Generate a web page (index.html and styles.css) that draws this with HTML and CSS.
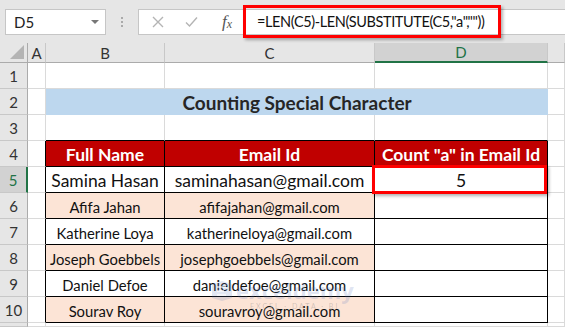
FILE: index.html
```html
<!DOCTYPE html>
<html lang="en">
<head>
    <meta charset="UTF-8">
    <meta name="viewport" content="width=device-width, initial-scale=1.0">
    <title>Counting Special Character</title>
    <link rel="stylesheet" href="styles.css">
</head>
<body>
    <div class="formula-row">
        <div class="name-box">
            <span>D5</span>
            <span class="caret"></span>
        </div>
        <div class="grip"><i></i><i></i><i></i></div>
        <div class="formula-bar">
            <svg class="fb-icon cancel" width="12" height="12" viewBox="0 0 12 12"><path d="M1 1L11 11M11 1L1 11" stroke="#b4b4b4" stroke-width="1.4" fill="none"/></svg>
            <svg class="fb-icon enter" width="13" height="12" viewBox="0 0 13 12"><path d="M1 6.5L4.5 10L12 1.5" stroke="#b4b4b4" stroke-width="1.4" fill="none"/></svg>
            <span class="fx"><i>f</i><sub>x</sub></span>
            <div class="formula-input">=LEN(C5)-LEN(SUBSTITUTE(C5,"a",""))</div>
        </div>
    </div>

    <div class="sheet">
        <!-- column headers -->
        <div class="hd corner"><span class="tri"></span></div>
        <div class="hd col">A</div>
        <div class="hd col">B</div>
        <div class="hd col">C</div>
        <div class="hd col sel">D</div>
        <div class="hd col"></div>

        <!-- 1 -->
        <div class="hd row">1</div>
        <div class="c"></div><div class="c"></div><div class="c"></div><div class="c"></div><div class="c"></div>

        <!-- 2 -->
        <div class="hd row">2</div>
        <div class="c"></div>
        <div class="c title">Counting Special Character</div>
        <div class="c"></div>

        <!-- 3 -->
        <div class="hd row">3</div>
        <div class="c"></div>
        <div class="c above"></div><div class="c above"></div><div class="c above"></div>
        <div class="c"></div>

        <!-- 4 -->
        <div class="hd row">4</div>
        <div class="c edge"></div>
        <div class="c t th">Full Name</div>
        <div class="c t th">Email Id</div>
        <div class="c t th">Count "a" in Email Id</div>
        <div class="c"></div>

        <!-- 5 -->
        <div class="hd row sel">5</div>
        <div class="c edge"></div>
        <div class="c t big">Samina Hasan</div>
        <div class="c t big">saminahasan@gmail.com</div>
        <div class="c t big active">5</div>
        <div class="c"></div>

        <!-- 6 -->
        <div class="hd row">6</div>
        <div class="c edge"></div>
        <div class="c t band">Afifa Jahan</div>
        <div class="c t band">afifajahan@gmail.com</div>
        <div class="c t"></div>
        <div class="c"></div>

        <!-- 7 -->
        <div class="hd row">7</div>
        <div class="c edge"></div>
        <div class="c t">Katherine Loya</div>
        <div class="c t">katherineloya@gmail.com</div>
        <div class="c t"></div>
        <div class="c"></div>

        <!-- 8 -->
        <div class="hd row">8</div>
        <div class="c edge"></div>
        <div class="c t band">Joseph Goebbels</div>
        <div class="c t band">josephgoebbels@gmail.com</div>
        <div class="c t"></div>
        <div class="c"></div>

        <!-- 9 -->
        <div class="hd row">9</div>
        <div class="c edge"></div>
        <div class="c t">Daniel Defoe</div>
        <div class="c t">danieldefoe@gmail.com</div>
        <div class="c t"></div>
        <div class="c"></div>

        <!-- 10 -->
        <div class="hd row">10</div>
        <div class="c edge"></div>
        <div class="c t band">Sourav Roy</div>
        <div class="c t band">souravroy@gmail.com</div>
        <div class="c t"></div>
        <div class="c"></div>

        <!-- 11, only its top edge shows -->
        <div class="hd row"></div>
        <div class="c"></div><div class="c"></div><div class="c"></div><div class="c"></div><div class="c"></div>

        <div class="mark">
            <svg class="mark-icon" width="24" height="22" viewBox="0 0 24 22">
                <path d="M2 4L12 1L22 4V18L12 21L2 18Z" fill="rgba(90,120,190,0.18)"/>
                <path d="M7 7H16M7 11H14M7 15H16" stroke="rgba(255,255,255,0.6)" stroke-width="2"/>
            </svg>
            <div>
                <div class="mark-name">exceldemy</div>
                <div class="mark-sub">EXCEL · DATA · BI</div>
            </div>
        </div>
    </div>
</body>
</html>
```

FILE: styles.css
```css
* {
    box-sizing: border-box;
}
body {
    margin: 0;
    width: 565px;
    height: 327px;
    overflow: hidden;
    background: #fff;
    font-family: Lato, "Open Sans", sans-serif;
}

/* name box + formula bar */
.formula-row {
    height: 43px;
    background: #e6e6e6;
    display: flex;
    align-items: center;
    padding-left: 5px;
}
.name-box {
    width: 101px;
    height: 26px;
    background: #fff;
    border: 1px solid #c6c6c6;
    display: flex;
    align-items: center;
    justify-content: space-between;
    padding: 0 6px 0 8px;
    font-size: 15px;
    color: #222;
}
.caret {
    width: 0;
    height: 0;
    border-left: 4px solid transparent;
    border-right: 4px solid transparent;
    border-top: 4px solid #777;
}
.grip {
    width: 32px;
    display: flex;
    flex-direction: column;
    align-items: center;
    gap: 2px;
}
.grip i {
    width: 2px;
    height: 2px;
    background: #aaa;
}
.formula-bar {
    flex: 1;
    height: 26px;
    background: #fff;
    border: 1px solid #c6c6c6;
    border-right: none;
    display: flex;
    align-items: center;
    padding-left: 13px;
}
.fb-icon.cancel {
    margin-right: 21px;
}
.fb-icon.enter {
    margin-right: 24px;
}
.fx {
    font-family: "Liberation Serif", serif;
    font-size: 17px;
    color: #555;
    margin-right: 11px;
}
.fx i {
    font-style: italic;
}
.fx sub {
    font-style: italic;
    font-size: 12px;
    vertical-align: -1px;
}
.formula-input {
    width: 258px;
    height: 33px;
    flex-shrink: 0;
    border: 3px solid #ff0000;
    box-shadow: 2px 2px 3px rgba(0, 0, 0, 0.3);
    display: flex;
    align-items: center;
    padding-left: 11px;
    font-size: 14.5px;
    letter-spacing: -0.4px;
    color: #111;
    white-space: nowrap;
}

/* worksheet */
.sheet {
    position: relative;
    display: grid;
    grid-template-columns: 28px 18px 119px 210px 173px 1fr;
    grid-template-rows: 20px repeat(10, 26px) 4px;
}
.hd {
    background: #e6e6e6;
    color: #333;
    font-size: 15px;
    display: flex;
    align-items: center;
    justify-content: center;
}
.hd.col {
    border-right: 1px solid #c8c8c8;
    border-bottom: 1px solid #ababab;
}
.hd.row {
    border-right: 1px solid #ababab;
    border-bottom: 1px solid #c8c8c8;
}
.corner {
    position: relative;
    border-right: 1px solid #ababab;
    border-bottom: 1px solid #ababab;
}
.tri {
    position: absolute;
    right: 3px;
    bottom: 3px;
    width: 0;
    height: 0;
    border-left: 14px solid transparent;
    border-bottom: 14px solid #b4b4b4;
}
.hd.col.sel {
    background: #d2d2d2;
    color: #217346;
    border-bottom: 2px solid #217346;
}
.hd.row.sel {
    background: #d2d2d2;
    color: #217346;
    border-right: 2px solid #217346;
}

.c {
    border-right: 1px solid #dadada;
    border-bottom: 1px solid #dadada;
    display: flex;
    align-items: center;
    justify-content: center;
    font-size: 14.8px;
    color: #111;
    white-space: nowrap;
}
.c.title {
    grid-column: span 3;
    background: #bdd7ee;
    border: none;
    font-weight: bold;
    font-size: 19px;
    color: #262626;
}
.c.above {
    border-bottom-color: #000;
}
.c.edge {
    border-right-color: #000;
}
.c.t {
    border-right-color: #000;
    border-bottom-color: #000;
    padding-top: 2px;
}
.c.th {
    background: #c00000;
    color: #fff;
    font-weight: bold;
    font-size: 17.5px;
}
.c.big {
    font-size: 17.5px;
}
.c.band {
    background: #fce4d6;
}
.c.active {
    position: relative;
}
.c.active::after {
    content: "";
    position: absolute;
    top: -2px;
    bottom: -2px;
    left: -3px;
    right: 0;
    border: 3px solid #ff0000;
    box-shadow: 2px 2px 3px rgba(0, 0, 0, 0.3);
    z-index: 1;
}

/* faint logo over the data */
.mark {
    position: absolute;
    left: 210px;
    top: 235px;
    display: flex;
    align-items: flex-start;
    gap: 2px;
    color: rgba(90, 120, 190, 0.2);
    pointer-events: none;
}
.mark-icon {
    margin-top: 2px;
}
.mark-name {
    font-family: "Open Sans", sans-serif;
    font-weight: bold;
    font-size: 22px;
    line-height: 24px;
}
.mark-sub {
    font-size: 7px;
    letter-spacing: 2px;
    padding-left: 14px;
    color: rgba(110, 110, 110, 0.3);
}
```
